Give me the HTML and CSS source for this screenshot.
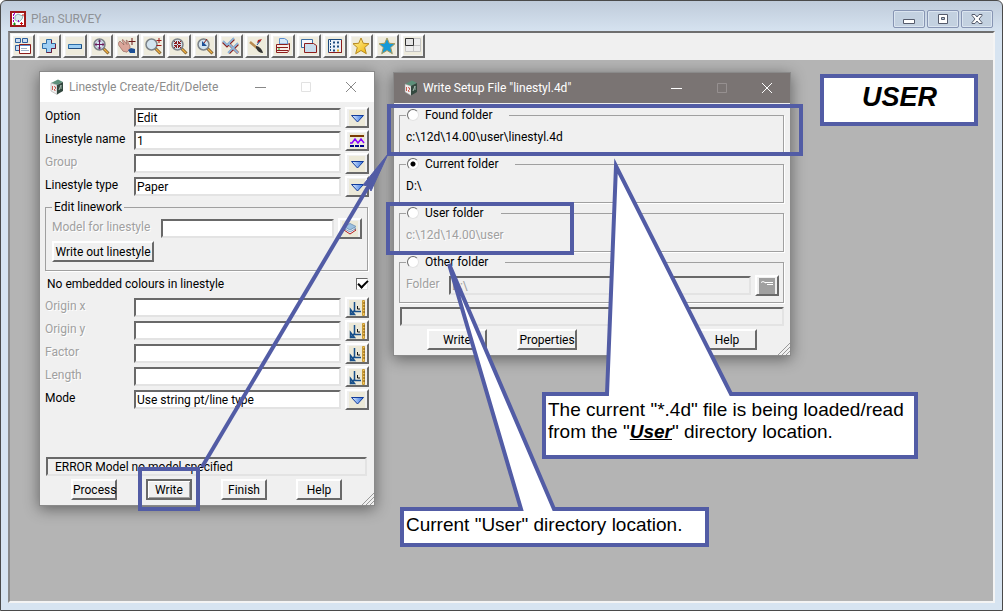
FILE: index.html
```html
<!DOCTYPE html>
<html lang="en">
<head>
  <meta charset="utf-8">
  <title>Plan SURVEY</title>
  <link rel="stylesheet" href="styles.css">
</head>
<body>

<!-- shared icons -->
<svg class="defs" width="0" height="0">
  <defs>
    <linearGradient id="blue" x1="0" y1="0" x2="1" y2="0">
      <stop offset="0" stop-color="#e4f1ff"/><stop offset="1" stop-color="#2f6fe0"/>
    </linearGradient>
    <linearGradient id="gold" x1="0" y1="0" x2="1" y2="1">
      <stop offset="0" stop-color="#fff6a0"/><stop offset="1" stop-color="#f0b000"/>
    </linearGradient>
  </defs>
  <symbol id="drop" viewBox="0 0 16 16">
    <path d="M2.500 5.500h12L8.500 12z" fill="url(#blue)" stroke="#123c9c"/>
  </symbol>
  <symbol id="measure" viewBox="0 0 16 16">
    <path d="M5.500 2v9.500H12M1.500 9.500v5h4zM1 15l5-5" fill="none" stroke="#174f8a" stroke-width="1.500"/>
    <path d="M8.500 6v3H11" fill="none" stroke="#111"/>
    <path d="M13.500 .5h2v15h-2z" fill="#f5c95c" stroke="#c89a38"/>
    <path d="M14 3h2M14 6h2M14 9h2M14 12h2" stroke="#7a5210"/>
  </symbol>
  <symbol id="cube" viewBox="0 0 14 16">
    <path d="M1 4l7-3.500 5 2.500-6 3z" fill="#5d8f7a"/>
    <path d="M1 4l6 2v9.500L1 12z" fill="#eee" stroke="#999" stroke-width=".5"/>
    <path d="M7 6l6-3v9l-6 3.500z" fill="#33483f"/>
    <path d="M2.500 7v4M4 7.500l1.500.5v1.500L4 11l1.500.5" fill="none" stroke="#c0392b" stroke-width=".8"/>
    <path d="M9 11l2-5v4" fill="none" stroke="#9fb5aa"/>
  </symbol>
  <symbol id="lens" viewBox="0 0 18 18">
    <path d="M11 11l5.500 5.500" stroke="#7a5a30" stroke-width="3"/>
    <path d="M12 12l4 4" stroke="#f0b040" stroke-width="1.500"/>
    <circle cx="7.500" cy="7.500" r="5.500" fill="#d3e3ef" stroke="#7c8288" stroke-width="1.500"/>
  </symbol>
</svg>

<div class="window">
  <header class="titlebar">
    <svg class="app-icon" viewBox="0 0 16 16">
      <path d="M1 1h14v14H1z" fill="#fff" stroke="#a01818" stroke-width="2"/>
      <path d="M5 5l3-2 2 1 3 1-1 3-3 3-4-2z" fill="#d7ebea" stroke="#8fb1b8"/>
      <path d="M3 4h1M3 7h1M3 10h1M8 10h1M4 2.500h1" stroke="#a000c0" stroke-width="2"/>
      <path d="M3 13h3M4.500 11.500v3" stroke="#159015"/>
      <path d="M10 12.500h3M11.500 11v3M12 4h2" stroke="#d01010"/>
    </svg>
    <span class="window-title">Plan SURVEY</span>
    <div class="window-buttons">
      <button aria-label="Minimize"><svg viewBox="0 0 12 12"><path d="M.5 6.500h11v4H.5z" fill="#fff" stroke="#555b6b"/></svg></button>
      <button aria-label="Restore"><svg viewBox="0 0 12 12"><path d="M1.500 1.500h9v9h-9z" fill="#fff" stroke="#555b6b"/><path d="M4.500 4.500h3v2h-3z" fill="#b5c6d8" stroke="#555b6b"/></svg></button>
      <button aria-label="Close"><svg viewBox="0 0 12 12"><path d="M1 1.500h3l2 2.500 2-2.500h3v1L8 6l3 3.500v1H8L6 8l-2 2.500H1v-1L4 6 1 2.500z" fill="#fff" stroke="#555b6b"/></svg></button>
    </div>
  </header>

  <main class="client">
    <div class="toolbar">
      <button class="tool" aria-label="Menu"><svg viewBox="0 0 18 18"><path d="M1.500 1.500h5v4h-5zM8.500 1.500h5v4h-5zM1.500 8.500h4v5h-4z" fill="#c9dcf2" stroke="#2d5f9e"/><path d="M5.500 7.500h11v9h-11z" fill="#fff" stroke="#8c1c1c"/><path d="M6 8.500h10" stroke="#5c8fd0"/><path d="M7 11.500h6M7 13.500h8" stroke="#9bb0c8"/></svg></button>
      <button class="tool" aria-label="Add"><svg viewBox="0 0 18 18"><path d="M6.500 2.500h5v4h4v5h-4v4h-5v-4h-4v-5h4z" fill="#9fd0f4" stroke="#2d6ea8"/><path d="M11.500 3v3.500M15.500 7v4.500h-4v4h-5" fill="none" stroke="#6a1c3c"/></svg></button>
      <button class="tool" aria-label="Remove"><svg viewBox="0 0 18 18"><path d="M2.500 7.500h13v4h-13z" fill="#9fd0f4" stroke="#2d6ea8"/><path d="M2.500 11.500h13v-4" fill="none" stroke="#1d4c80"/></svg></button>
      <button class="tool" aria-label="Zoom fit"><svg viewBox="0 0 18 18"><use href="#lens"/><path d="M7.500 3v9M3 7.500h9" stroke="#6a1a5a"/><path d="M7.500 2.500l2 2h-4zM7.500 12.500l2-2h-4zM2.500 7.500l2-2v4zM12.500 7.500l-2-2v4z" fill="#6a1a5a"/></svg></button>
      <button class="tool" aria-label="Pan"><svg viewBox="0 0 18 18"><path d="M1 5l1-1 4 4-2-5 1-.5 4 5-1-4 1-.3 3 6v3l-3 3-4-1-5-7z" fill="#dba69a" stroke="#8a5b52" stroke-width=".6"/><path d="M10 13l3-2 4 1v4h-5z" fill="#1c4f96"/><path d="M14 1v7M10.500 4.500h7" stroke="#6a1a1a"/></svg></button>
      <button class="tool" aria-label="Zoom in or out"><svg viewBox="0 0 18 18"><use href="#lens"/><path d="M12.500 3.500h5M15 1v5M12.500 8.500h5" stroke="#a01818"/></svg></button>
      <button class="tool" aria-label="Zoom all"><svg viewBox="0 0 18 18"><use href="#lens"/><path d="M4 4l7 7M11 4l-7 7M4 6.500h2.500V4M11 6.500H8.500V4M4 8.500h2.500V11M11 8.500H8.500V11" fill="none" stroke="#8c1c1c"/></svg></button>
      <button class="tool" aria-label="Zoom previous"><svg viewBox="0 0 18 18"><use href="#lens"/><path d="M6 4v5h5z" fill="#1c4f96"/><path d="M8 6l3-4" stroke="#8c1c1c"/></svg></button>
      <button class="tool" aria-label="Toggle"><svg viewBox="0 0 18 18"><path d="M1 5l4 4 7-7M7 16L16 7M8 8l8 8" fill="none" stroke="#8c1c1c" stroke-width="2.500"/><path d="M1 4l4 4 7-7M6 16l10-10M7 7l9 9" fill="none" stroke="#8fb8dc" stroke-width="1.800"/></svg></button>
      <button class="tool" aria-label="Redraw"><svg viewBox="0 0 18 18"><path d="M2 5l7 6" stroke="#b98a50" stroke-width="2.500"/><path d="M8 9c3 0 6 3 7 7-3 0-6-2-7-5z" fill="#333"/><path d="M9 6l1-3 4-1-2 3z" fill="#b02020"/><path d="M9 8l3-4" stroke="#1c4f96"/></svg></button>
      <button class="tool" aria-label="Print"><svg viewBox="0 0 18 18"><path d="M5.500 7V1.500h5l3 2V7z" fill="#d7e8fa" stroke="#5c8fd0"/><path d="M2.500 7.500h11l2-1v6l-2 3h-11z" fill="#f8ece8" stroke="#8c1c1c"/><path d="M2 10.500h12M3 13.500h11" stroke="#8c1c1c"/><path d="M4 12h2" stroke="#20a020"/></svg></button>
      <button class="tool" aria-label="Windows"><svg viewBox="0 0 18 18"><path d="M1.500 2.500h11v8h-11z" fill="#f2f6fb" stroke="#3b6ea5"/><path d="M4.500 6.500h9l3 2v7h-12z" fill="#c8dcec" stroke="#8c1c1c"/></svg></button>
      <button class="tool" aria-label="Settings"><svg viewBox="0 0 18 18"><path d="M2.500 2.500h13v13h-13z" fill="#e9f1fa" stroke="#1d4c80"/><path d="M4.500 3v12" stroke="#1d4c80" stroke-dasharray="2 1"/><path d="M7 5.500h2M11 5.500h2M7 9.500h2M11 9.500h2M7 13.500h2" stroke="#1d4c80" stroke-width="2"/><path d="M11 13.500h2" stroke="#e0b020" stroke-width="2"/><path d="M15.500 3v12.500H3" fill="none" stroke="#8c1c1c"/></svg></button>
      <button class="tool" aria-label="Favourites"><svg viewBox="0 0 18 18"><path d="M9 1l2.300 5.300 5.700.4-4.300 3.800 1.600 6.200L9 13.500l-5.300 3.200 1.600-6.200L1 6.700l5.700-.4z" fill="url(#gold)" stroke="#b88a20"/></svg></button>
      <button class="tool" aria-label="User favourites"><svg viewBox="0 0 18 18"><path d="M9 1l2.300 5.300 5.700.4-4.300 3.800 1.600 6.200L9 13.500l-5.300 3.200 1.600-6.200L1 6.700l5.700-.4z" fill="#159ad8" stroke="#a89a5c"/></svg></button>
      <button class="tool" aria-label="Layout"><svg viewBox="0 0 18 18"><path d="M1.500 1.500h15v13h-15zM9.500 1.500v13M1.500 8.500h15" fill="#eee" stroke="#c4c4c4"/><path d="M1.500 1.500h8v7h-8z" fill="#e4e4e4" stroke="#333"/></svg></button>
    </div>

    <div class="stage">

      <section class="dialog linestyle">
        <header class="dialog-title">
          <svg class="cube"><use href="#cube"/></svg>
          <span>Linestyle Create/Edit/Delete</span>
          <svg class="caption" viewBox="0 0 102 12"><path d="M0 6.500h11M91 1l10 10M101 1L91 11" fill="none" stroke="#888"/><path d="M46.500 1.500h9v9h-9z" fill="none" stroke="#e2e2e2"/></svg>
        </header>
        <form class="dialog-body" onsubmit="return false">
          <div class="row"><label for="option">Option</label><input type="text" id="option" value="Edit"><button class="pick" aria-label="Choose option"><svg><use href="#drop"/></svg></button></div>
          <div class="row"><label for="name">Linestyle name</label><input type="text" id="name" value="1"><button class="pick" aria-label="Choose linestyle"><svg viewBox="0 0 16 16"><path d="M1 3h14" stroke="#7a3b00" stroke-width="2"/><path d="M1 10h2l3-4 3 4 3-4 3 4" fill="none" stroke="#8a00ff" stroke-width="1.500"/><path d="M1 13h14" stroke="#00008b" stroke-width="2" stroke-dasharray="4 1"/></svg></button></div>
          <div class="row off"><label for="group">Group</label><input type="text" id="group"><button class="pick" aria-label="Choose group"><svg><use href="#drop"/></svg></button></div>
          <div class="row"><label for="type">Linestyle type</label><input type="text" id="type" value="Paper"><button class="pick" aria-label="Choose type"><svg><use href="#drop"/></svg></button></div>

          <fieldset class="group linework">
            <legend>Edit linework</legend>
            <div class="row off"><label for="model">Model for linestyle</label><input type="text" id="model"><button class="pick" aria-label="Choose model"><svg viewBox="0 0 16 16"><path d="M2 9l6 4 6-4-6-3z" fill="#fff" stroke="#b01818"/><path d="M2 7.500l6 3.500 6-3.500L8 5z" fill="#dfeaf4" stroke="#7b9cbc"/><path d="M2 5.500l6 3.500 6-3.500-6-3z" fill="#9cc0e0" stroke="#7b9cbc"/></svg></button></div>
            <button class="push">Write out linestyle</button>
          </fieldset>

          <div class="check"><label for="embedded">No embedded colours in linestyle</label><input type="checkbox" id="embedded" checked></div>

          <div class="row off"><label for="ox">Origin x</label><input type="text" id="ox"><button class="pick" aria-label="Measure x"><svg><use href="#measure"/></svg></button></div>
          <div class="row off"><label for="oy">Origin y</label><input type="text" id="oy"><button class="pick" aria-label="Measure y"><svg><use href="#measure"/></svg></button></div>
          <div class="row off"><label for="factor">Factor</label><input type="text" id="factor"><button class="pick" aria-label="Measure factor"><svg><use href="#measure"/></svg></button></div>
          <div class="row off"><label for="length">Length</label><input type="text" id="length"><button class="pick" aria-label="Measure length"><svg><use href="#measure"/></svg></button></div>
          <div class="row"><label for="mode">Mode</label><input type="text" id="mode" value="Use string pt/line type"><button class="pick" aria-label="Choose mode"><svg><use href="#drop"/></svg></button></div>

          <div class="status">ERROR Model no model specified</div>
          <div class="actions">
            <button class="push">Process</button>
            <button class="push default">Write</button>
            <button class="push">Finish</button>
            <button class="push">Help</button>
          </div>
        </form>
        <svg class="grip" viewBox="0 0 12 12"><path d="M0 12L12 0M4 12l8-8M8 12l4-4" stroke="#999"/></svg>
      </section>

      <section class="dialog setup">
        <header class="dialog-title">
          <svg class="cube"><use href="#cube"/></svg>
          <span>Write Setup File "linestyl.4d"</span>
          <svg class="caption" viewBox="0 0 102 12"><path d="M0 6.500h11M91 1l10 10M101 1L91 11" fill="none" stroke="#fff"/><path d="M46.500 1.500h9v9h-9z" fill="none" stroke="#969090"/></svg>
        </header>
        <form class="dialog-body" onsubmit="return false">
          <fieldset class="group">
            <legend><input type="radio" name="folder" id="found"><label for="found">Found folder</label></legend>
            <p>c:\12d\14.00\user\linestyl.4d</p>
          </fieldset>
          <fieldset class="group">
            <legend><input type="radio" name="folder" id="current" checked><label for="current">Current folder</label></legend>
            <p>D:\</p>
          </fieldset>
          <fieldset class="group">
            <legend><input type="radio" name="folder" id="user"><label for="user">User folder</label></legend>
            <p class="faded">c:\12d\14.00\user</p>
          </fieldset>
          <fieldset class="group other">
            <legend><input type="radio" name="folder" id="other"><label for="other">Other folder</label></legend>
            <div class="row off"><label for="path">Folder</label><input type="text" id="path" value="D:\" disabled><button class="pick" aria-label="Browse"><svg viewBox="0 0 16 16"><path d="M0 0h16v16H0z" fill="#a0a0a0"/><path d="M2 4.500l2-1 3 1.500M6 4.500h8M8 6.500h6" fill="none" stroke="#fff"/></svg></button></div>
          </fieldset>
          <div class="status"></div>
          <div class="actions">
            <button class="push">Write</button>
            <button class="push">Properties</button>
            <button class="push last">Help</button>
          </div>
        </form>
        <svg class="grip" viewBox="0 0 12 12"><path d="M0 12L12 0M4 12l8-8M8 12l4-4" stroke="#999"/></svg>
      </section>

      <!-- highlight boxes, arrow and callouts drawn over the dialogs -->
      <svg class="marks">
        <g fill="none">
          <path d="M379 46h412v48H379z"/>
          <path d="M378 144h184v49H378z"/>
          <path d="M130 409h58v40h-58z"/>
          <path d="M192 407L358 127"/>
        </g>
        <path class="head" d="M378 94l-25 31 5 1 3 5z"/>
        <g fill="#fff">
          <path d="M534 334h63l9-228 115 228h185v63H534z"/>
          <path d="M392 449h119L439 204l105 245h153v36H392z"/>
          <path d="M812 16h154v48H812z"/>
        </g>
      </svg>
      <div class="note reading">The current "*.4d" file is being loaded/read<br>from the "<em>User</em>" directory location.</div>
      <div class="note location">Current "User" directory location.</div>
      <div class="note heading">USER</div>
    </div>
  </main>
</div>
</body>
</html>
```
FILE: styles.css
```css
* { box-sizing: border-box; }

body {
  margin: 0;
  background: #fff;
  color: #000;
  font: 12px/16px Roboto, "Noto Sans", sans-serif;
}

button, input {
  font: inherit;
  color: inherit;
  margin: 0;
  padding: 0;
}

.defs { position: absolute; }

/* main window */
.window {
  display: flex;
  flex-direction: column;
  height: 100vh;
  padding: 0 7px 7px;
  border: 1px solid #4a4a4a;
  border-radius: 6px 6px 0 0;
  background: linear-gradient(#bfcbda, #d7e4f1 32px);
}

.titlebar {
  display: flex;
  align-items: center;
  gap: 5px;
  height: 30px;
  padding: 6px 2px 0;
  color: #8f9296;
}

.app-icon { width: 16px; height: 16px; }
.window-title { flex: 1; }

.window-buttons {
  display: flex;
  gap: 2px;
}

.window-buttons button {
  width: 32px;
  height: 18px;
  border: 1px solid #8795b3;
  border-radius: 2px;
  background: #c3d1e0;
  box-shadow: inset 0 0 0 1px #dbe5f0;
  line-height: 0;
}

.window-buttons svg { width: 12px; height: 12px; }

.client {
  display: flex;
  flex: 1;
  flex-direction: column;
  min-height: 0;
  border: 2px solid;
  border-color: #6e6e6e #f4f4f4 #f4f4f4 #8a8a8a;
}

.toolbar {
  display: flex;
  gap: 2px;
  padding: 1px 1px 2px;
  background: #f0f0f0;
}

.tool, .pick, .push {
  border: 2px solid;
  border-color: #fff #696969 #696969 #fff;
  background: #f0f0f0;
}

.tool {
  width: 24px;
  height: 24px;
  line-height: 0;
}

.tool svg {
  width: 18px;
  height: 18px;
  background: #eeebdc;
}

.stage {
  position: relative;
  flex: 1;
  overflow: hidden;
  background: #b4b4b4;
}

/* dialogs */
.dialog {
  position: absolute;
  border: 1px solid #8a8a8a;
  background: #f0f0f0;
  box-shadow: 0 3px 14px rgba(0, 0, 0, .45);
}

.linestyle {
  left: 29px;
  top: 11px;
  width: 336px;
}

.setup {
  left: 383px;
  top: 12px;
  width: 398px;
}

.dialog-title {
  display: flex;
  align-items: center;
  gap: 5px;
  height: 30px;
  padding: 0 17px 0 10px;
  background: #fff;
  color: #8c8c8c;
}

.dialog-title span { flex: 1; }

.setup .dialog-title {
  background: #7a7473;
  color: #fff;
}

.cube { width: 14px; height: 16px; }
.caption { width: 102px; height: 12px; }

.dialog-body { padding: 5px; }

.row {
  display: grid;
  grid-template-columns: 89px 1fr 24px;
  align-items: center;
  height: 21px;
  margin-bottom: 2px;
}

.row label {
  height: 21px;
  line-height: 18px;
  white-space: nowrap;
}

.off label, .faded {
  color: #a0a0a0;
  text-shadow: 1px 1px #fff;
}

.row input {
  width: calc(100% - 4px);
  height: 19px;
  padding: 1px 1px 0;
  border: 2px solid;
  border-color: #696969 #e3e3e3 #e3e3e3 #696969;
  border-radius: 0;
  background: #fff;
  line-height: 14px;
}

.row input:disabled {
  background: #f0f0f0;
  color: #a0a0a0;
}

.pick {
  width: 24px;
  height: 21px;
  line-height: 0;
}

.pick svg {
  width: 16px;
  height: 16px;
  background: #ece9d8;
}

.push {
  height: 21px;
  padding: 0;
  line-height: 16px;
  white-space: nowrap;
}

.push.default {
  border-color: #696969;
  box-shadow: inset 1px 1px #fff, inset -1px -1px #a0a0a0;
}

.group {
  position: relative;
  min-width: 0;
  margin: 0;
  padding: 0;
  border: 1px solid #a0a0a0;
  box-shadow: 1px 1px #fff;
}

.group legend {
  padding: 0 3px;
  height: 16px;
}

.linework {
  height: 72px;
  margin: 0 1px 5px 0;
  padding: 0 5px 0 6px;
}

.linework legend { padding: 0 2px; }
.linework .row { grid-template-columns: 109px 1fr 24px; margin: 3px 0 2px; }
.linework .push { width: 102px; }

.check {
  display: flex;
  align-items: center;
  justify-content: space-between;
  height: 16px;
  margin-bottom: 5px;
  padding: 0 1px 0 2px;
}

.check input {
  appearance: none;
  width: 12px;
  height: 12px;
  border: 1px solid;
  border-color: #696969 #e3e3e3 #e3e3e3 #696969;
  background: #fff;
}

.check input:checked::before {
  content: "";
  display: block;
  width: 8px;
  height: 4px;
  margin: 1px 0 0 1px;
  border: solid #000;
  border-width: 0 0 2px 2px;
  transform: rotate(-45deg);
}

.status {
  height: 19px;
  padding: 0 7px;
  border: 2px solid;
  border-color: #696969 #e3e3e3 #e3e3e3 #696969;
}

.linestyle .status { margin: 47px 2px 3px 1px; }

.actions { display: flex; }

.linestyle .actions {
  gap: 29px;
  padding-left: 26px;
}

.linestyle .actions .push { width: 46px; }

/* folder groups of the setup dialog */
.setup .dialog-body { padding: 4px 6px 5px 5px; }

.setup .group {
  height: 47px;
  margin-bottom: 2px;
  padding-left: 6px;
}

.setup .other { height: 49px; padding-right: 4px; }

.setup legend {
  display: flex;
  align-items: center;
  gap: 6px;
  padding: 0 17px 0 1px;
}

.setup legend input {
  appearance: none;
  width: 12px;
  height: 12px;
  border: 1px solid;
  border-color: #696969 #e3e3e3 #e3e3e3 #696969;
  border-radius: 50%;
  background: #fff;
}

.setup legend input:checked { background: radial-gradient(#000 2px, #fff 3px); }

.setup p { margin: 6px 0 0; }
.setup .row { grid-template-columns: 43px 1fr 24px; margin: 5px 0 0; }
.setup .status { margin: 4px 0 3px 1px; }

.setup .actions {
  display: grid;
  grid-template-columns: repeat(4, 60px);
  gap: 30px;
  padding-left: 28px;
}

.setup .last { grid-column: 4; }

.grip {
  position: absolute;
  right: 0;
  bottom: 0;
  width: 12px;
  height: 12px;
}

/* annotations */
.marks {
  position: absolute;
  inset: 0;
  width: 100%;
  height: 100%;
  pointer-events: none;
  stroke: #525ca5;
  stroke-width: 4px;
}

.marks .head { fill: #525ca5; stroke-width: 1px; }

.note {
  position: absolute;
  font: 19px/22px "Liberation Sans", Arial, sans-serif;
  white-space: nowrap;
}

.note em { font-weight: bold; text-decoration: underline; }

.reading { left: 538px; top: 339px; }
.location { left: 396px; top: 454px; }

.heading {
  left: 852px;
  top: 22px;
  font-size: 27px;
  line-height: 30px;
  font-weight: bold;
  font-style: italic;
}
```
